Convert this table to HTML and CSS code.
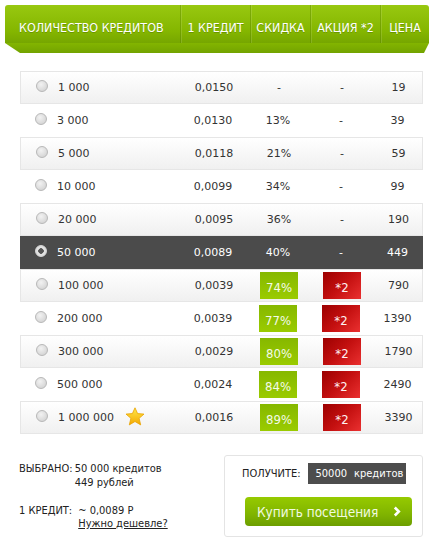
FILE: index.html
```html
<!DOCTYPE html>
<html lang="ru">
<head>
  <meta charset="UTF-8">
  <meta name="viewport" content="width=device-width, initial-scale=1.0">
  <title>Купить кредиты</title>
  <link rel="stylesheet" href="styles.css">
</head>
<body>
  <div class="page">

    <div class="head">
      <div class="head-cell head-name">Количество кредитов</div>
      <div class="head-cell head-one">1 кредит</div>
      <div class="head-cell head-sale">Скидка</div>
      <div class="head-cell head-promo">Акция *2</div>
      <div class="head-cell head-price">Цена</div>
    </div>

    <div class="list">
      <div class="row odd">
        <div class="name"><span class="radio"></span>1 000</div>
        <div class="cell">0,0150</div>
        <div class="cell">-</div>
        <div class="cell">-</div>
        <div class="cell">19</div>
      </div>
      <div class="row">
        <div class="name"><span class="radio"></span>3 000</div>
        <div class="cell">0,0130</div>
        <div class="cell">13%</div>
        <div class="cell">-</div>
        <div class="cell">39</div>
      </div>
      <div class="row odd">
        <div class="name"><span class="radio"></span>5 000</div>
        <div class="cell">0,0118</div>
        <div class="cell">21%</div>
        <div class="cell">-</div>
        <div class="cell">59</div>
      </div>
      <div class="row">
        <div class="name"><span class="radio"></span>10 000</div>
        <div class="cell">0,0099</div>
        <div class="cell">34%</div>
        <div class="cell">-</div>
        <div class="cell">99</div>
      </div>
      <div class="row odd">
        <div class="name"><span class="radio"></span>20 000</div>
        <div class="cell">0,0095</div>
        <div class="cell">36%</div>
        <div class="cell">-</div>
        <div class="cell">190</div>
      </div>
      <div class="row selected">
        <div class="name"><span class="radio checked"></span>50 000</div>
        <div class="cell">0,0089</div>
        <div class="cell">40%</div>
        <div class="cell">-</div>
        <div class="cell">449</div>
      </div>
      <div class="row odd">
        <div class="name"><span class="radio"></span>100 000</div>
        <div class="cell">0,0039</div>
        <div class="cell"><span class="badge green">74%</span></div>
        <div class="cell"><span class="badge red">*2</span></div>
        <div class="cell">790</div>
      </div>
      <div class="row">
        <div class="name"><span class="radio"></span>200 000</div>
        <div class="cell">0,0039</div>
        <div class="cell"><span class="badge green">77%</span></div>
        <div class="cell"><span class="badge red">*2</span></div>
        <div class="cell">1390</div>
      </div>
      <div class="row odd">
        <div class="name"><span class="radio"></span>300 000</div>
        <div class="cell">0,0029</div>
        <div class="cell"><span class="badge green">80%</span></div>
        <div class="cell"><span class="badge red">*2</span></div>
        <div class="cell">1790</div>
      </div>
      <div class="row">
        <div class="name"><span class="radio"></span>500 000</div>
        <div class="cell">0,0024</div>
        <div class="cell"><span class="badge green">84%</span></div>
        <div class="cell"><span class="badge red">*2</span></div>
        <div class="cell">2490</div>
      </div>
      <div class="row odd">
        <div class="name"><span class="radio"></span>1 000 000
          <svg class="star" width="20" height="19" viewBox="0 0 20 19">
            <defs>
              <linearGradient id="starFill" x1="0" y1="0" x2="0" y2="1">
                <stop offset="0" stop-color="#ffe94a"/>
                <stop offset="1" stop-color="#f4a800"/>
              </linearGradient>
            </defs>
            <polygon points="10,0.8 12.6,6.6 19,7.1 14.1,11.3 15.7,17.9 10,14.5 4.3,17.9 5.9,11.3 1,7.1 7.4,6.6" fill="url(#starFill)" stroke="#e8a200" stroke-width="0.8" stroke-linejoin="round"/>
          </svg>
        </div>
        <div class="cell">0,0016</div>
        <div class="cell"><span class="badge green">89%</span></div>
        <div class="cell"><span class="badge red">*2</span></div>
        <div class="cell">3390</div>
      </div>
    </div>

    <div class="summary">
      <div class="chosen">
        <div class="pair">
          <div class="label">ВЫБРАНО:</div>
          <div class="values">
            <div>50 000 кредитов</div>
            <div>449 рублей</div>
          </div>
        </div>
        <div class="pair pair-rate">
          <div class="label">1 КРЕДИТ:</div>
          <div class="values">
            <div>~ 0,0089 Р</div>
            <a class="cheaper" href="#">Нужно дешевле?</a>
          </div>
        </div>
      </div>

      <div class="get-box">
        <div class="get-line">
          <span class="get-label">ПОЛУЧИТЕ:</span>
          <span class="get-amount"><span class="get-num">50000</span>кредитов</span>
        </div>
        <button class="buy-btn">Купить посещения
          <svg class="chevron" width="8" height="11" viewBox="0 0 8 11">
            <polyline points="1.8,1.5 5.8,5.5 1.8,9.5" fill="none" stroke="#ffffff" stroke-width="2.6"/>
          </svg>
        </button>
      </div>
    </div>

  </div>
</body>
</html>
```

FILE: styles.css
```css
body {
  margin: 0;
  background: #ffffff;
  font-family: "DejaVu Sans", Verdana, sans-serif;
  color: #333333;
}

.page {
  width: 433px;
  padding-top: 5px;
}

/* header ribbon */

.head {
  display: flex;
  margin: 0 4px 0 5px;
  height: 48px;
  background: linear-gradient(#98c810 0%, #84b600 55%, #76a600 79%, #82b400 80%, #73a300 100%);
  clip-path: polygon(0 0, 100% 0, 100% 38px, calc(100% - 5px) 100%, 15px 100%, 0 38px);
  border-radius: 3px 3px 0 0;
}

.head-cell {
  height: 38px;
  box-sizing: border-box;
  padding-top: 8px;
  line-height: 30px;
  font-family: "DejaVu Sans Condensed", Tahoma, sans-serif;
  font-size: 12.4px;
  text-transform: uppercase;
  color: #ffffff;
  text-shadow: 0 1px 0 rgba(60, 90, 0, 0.35);
  text-align: center;
  border-left: 1px solid rgba(80, 120, 0, 0.35);
  box-shadow: inset 1px 0 0 rgba(255, 255, 255, 0.12);
}

.head-name {
  width: 175px;
  text-align: left;
  padding-left: 14px;
  border-left: none;
  box-shadow: none;
}

.head-one {
  width: 70px;
}

.head-sale {
  width: 60px;
}

.head-promo {
  width: 70px;
}

.head-price {
  flex: 1;
}

/* credit list */

.list {
  margin: 18px 10px 0 20px;
}

.row {
  display: grid;
  grid-template-columns: 160px 66px 64px 62px 51px;
  height: 33px;
  box-sizing: border-box;
  align-items: center;
  font-size: 11px;
}

.row.odd {
  background: linear-gradient(#ffffff, #f0f0f0);
  border: 1px solid #e6e6e6;
}

.row.selected {
  background: #4b4b4b;
  color: #ffffff;
}

.name {
  display: flex;
  align-items: center;
  padding-left: 15px;
}

.radio {
  width: 12px;
  height: 12px;
  box-sizing: border-box;
  border-radius: 50%;
  border: 1px solid #b8b8b8;
  background: radial-gradient(circle at 40% 35%, #f2f2f2 0%, #d8d8d8 70%, #cccccc 100%);
  margin-right: 10px;
  margin-bottom: 4px;
}

.radio.checked {
  border-color: #d8d8d8;
  background: radial-gradient(circle, #555555 0 2.5px, #e6e6e6 3px, #cfcfcf 100%);
}

.star {
  margin-left: 11px;
  margin-bottom: 2px;
}

.cell {
  text-align: center;
}

.badge {
  display: block;
  width: 38px;
  height: 27px;
  box-sizing: border-box;
  margin: 0 auto;
  padding-top: 5px;
  line-height: 22px;
  font-family: "DejaVu Sans Condensed", Tahoma, sans-serif;
  font-size: 13px;
  color: #f4fbe8;
}

.badge.green {
  background: linear-gradient(#86b800, #9acb00);
}

.badge.red {
  background: linear-gradient(135deg, #9c0000 0%, #c41010 50%, #ea3030 100%);
  color: #fff2f2;
}

/* bottom summary */

.summary {
  display: flex;
  justify-content: space-between;
  margin: 21px 10px 0 19px;
}

.chosen {
  padding-top: 7px;
  font-family: "DejaVu Sans Condensed", Tahoma, sans-serif;
  font-size: 11px;
  color: #222222;
}

.pair {
  display: flex;
  gap: 2px;
  line-height: 14px;
}

.pair-rate {
  margin-top: 14px;
  gap: 6px;
  line-height: 13px;
}

.cheaper {
  color: #222222;
}

.get-box {
  width: 199px;
  height: 82px;
  box-sizing: border-box;
  border: 1px solid #e4e4e4;
  border-radius: 3px;
  padding: 7px 10px 0 17px;
}

.get-line {
  display: flex;
  align-items: center;
  font-family: "DejaVu Sans Condensed", Tahoma, sans-serif;
  font-size: 11px;
  color: #222222;
}

.get-amount {
  margin-left: 7px;
  height: 21px;
  line-height: 21px;
  padding: 0 3px 0 8px;
  background: #4d4d4d;
  color: #ffffff;
  font-size: 11px;
}

.get-num {
  margin-right: 7px;
}

.buy-btn {
  display: flex;
  align-items: center;
  justify-content: space-between;
  width: 167px;
  height: 29px;
  margin: 13px 0 0 3px;
  padding: 0 11px 0 12px;
  border: none;
  border-radius: 4px;
  background: linear-gradient(#96ca00, #80b400 60%, #6c9e00);
  font-family: "DejaVu Sans Condensed", Tahoma, sans-serif;
  font-size: 13.5px;
  color: #f2fbe0;
  cursor: pointer;
}
```
